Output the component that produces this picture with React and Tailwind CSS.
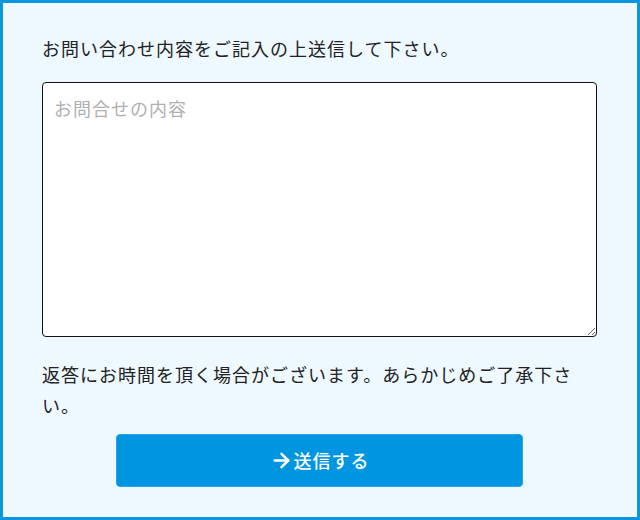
import React from "react";
import { ArrowRight } from "lucide-react";

export default function App() {
  const font = { fontFamily: '"Noto Sans CJK JP", "Noto Sans", sans-serif' };
  return (
    <div
      className="w-[640px] h-[520px] border-[3px] border-[#0d95e0] bg-[#eef8ff] pl-[39px] pr-[40px] pt-[30px] text-[#222]"
      style={font}
    >
      <p className="text-[18px] leading-[31px] tracking-[1px]">
        お問い合わせ内容をご記入の上送信して下さい。
      </p>
      <textarea
        className="mt-[18px] block w-full h-[255px] border border-[#111] rounded-[4px] bg-white px-[11px] pt-[10px] text-[18px] leading-[31px] tracking-[1px] placeholder:text-[#b0b0b0] outline-none"
        placeholder="お問合せの内容"
        style={font}
      />
      <p className="mt-[22px] text-[18px] leading-[31px] tracking-[1px]">
        返答にお時間を頂く場合がございます。あらかじめご了承下さい。
      </p>
      <div className="mt-[13px] flex justify-center">
        <button
          className="w-[407px] h-[53px] rounded-[4px] bg-[#0095e1] border border-[#2aa2e6] flex items-center justify-center gap-[1px] text-white text-[18px] font-medium tracking-[1px]"
          style={font}
        >
          <ArrowRight size={23} strokeWidth={2.6} />
          <span>送信する</span>
        </button>
      </div>
    </div>
  );
}
